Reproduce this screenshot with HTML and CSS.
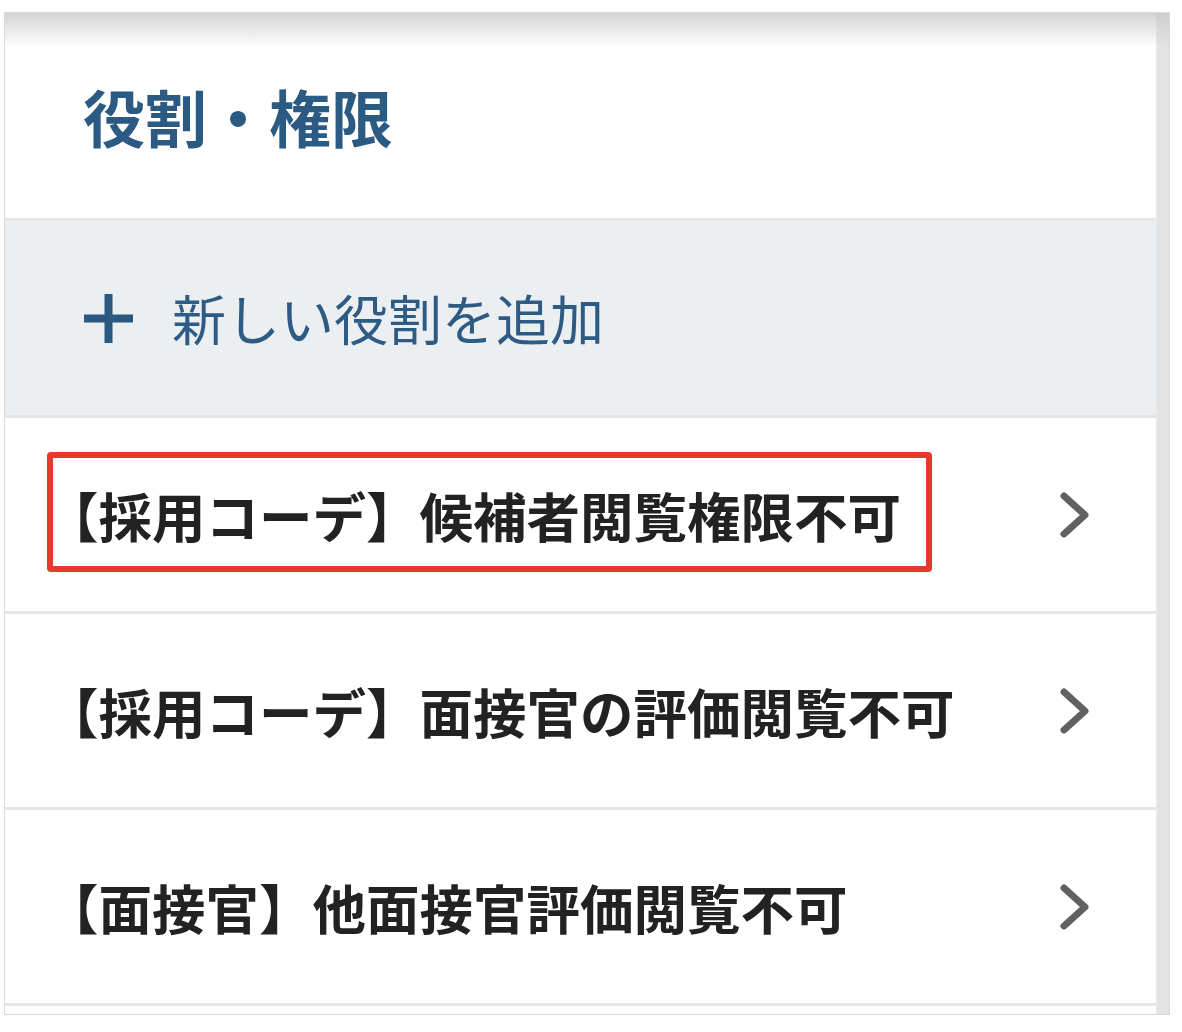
FILE: index.html
```html
<!DOCTYPE html>
<html lang="ja">

<head>
    <meta charset="UTF-8">
    <meta name="viewport" content="width=device-width, initial-scale=1.0">
    <title>役割・権限</title>
    <link rel="stylesheet" href="styles.css">
</head>

<body>
    <div class="panel">
        <div class="list">
            <div class="header">
                <h1 class="title">役割・権限</h1>
            </div>

            <div class="add-row">
                <svg class="plus" width="51" height="51" viewBox="0 0 51 51">
                    <path d="M25.5 1 V50 M1 25.5 H50" stroke="#2a5880" stroke-width="8" fill="none" />
                </svg>
                <span class="add-text">新しい役割を追加</span>
            </div>

            <div class="role">
                <span class="role-name">【採用コーデ】候補者閲覧権限不可</span>
                <svg class="chevron" width="30" height="46" viewBox="0 0 30 46">
                    <polyline points="4,4 25,23 4,42" stroke="#616161" stroke-width="7" fill="none" stroke-linecap="round" stroke-linejoin="round" />
                </svg>
                <div class="highlight"></div>
            </div>

            <div class="role">
                <span class="role-name">【採用コーデ】面接官の評価閲覧不可</span>
                <svg class="chevron" width="30" height="46" viewBox="0 0 30 46">
                    <polyline points="4,4 25,23 4,42" stroke="#616161" stroke-width="7" fill="none" stroke-linecap="round" stroke-linejoin="round" />
                </svg>
            </div>

            <div class="role">
                <span class="role-name">【面接官】他面接官評価閲覧不可</span>
                <svg class="chevron" width="30" height="46" viewBox="0 0 30 46">
                    <polyline points="4,4 25,23 4,42" stroke="#616161" stroke-width="7" fill="none" stroke-linecap="round" stroke-linejoin="round" />
                </svg>
            </div>

            <!-- next row, scrolled out of view -->
            <div class="role"></div>
        </div>
        <div class="scrollbar"></div>
    </div>
</body>

</html>
```

FILE: styles.css
```css
body {
    margin: 0;
    background: #fff;
    font-family: "Noto Sans CJK JP", "Noto Sans", sans-serif;
}

.panel {
    position: relative;
    margin: 12px 0 0 4px;
    width: 1166px;
    height: 1003px;
    box-sizing: border-box;
    border: 1px solid #d9d9d9;
    display: flex;
    overflow: hidden;
}

/* soft shadow along the top edge */
.panel::before {
    content: "";
    position: absolute;
    top: 0;
    left: 0;
    right: 0;
    height: 34px;
    background: linear-gradient(rgba(200, 200, 200, 0.8), rgba(255, 255, 255, 0));
    pointer-events: none;
}

.list {
    flex: 1;
    overflow: hidden;
}

.scrollbar {
    width: 12px;
    background: #e3e3e3;
    border-left: 1px solid #ececec;
}

.header {
    height: 205px;
    display: flex;
    align-items: center;
    padding-left: 78px;
    border-bottom: 3px solid #e6e6e6;
}

.title {
    margin: 0;
    font-size: 62px;
    font-weight: 700;
    color: #2b5a83;
    line-height: 1;
}

.add-row {
    height: 194px;
    display: flex;
    align-items: center;
    gap: 38px;
    padding-left: 78px;
    background: #eceff2;
    border-bottom: 3px solid #e4e4e4;
}

.add-text {
    font-size: 54px;
    font-weight: 400;
    color: #2e5b84;
    line-height: 1;
}

.role {
    position: relative;
    height: 193px;
    display: flex;
    align-items: center;
    justify-content: space-between;
    padding: 0 66px 0 40px;
    border-bottom: 3px solid #e6e6e6;
}

.role-name {
    font-size: 53.5px;
    font-weight: 700;
    color: #222;
    line-height: 1;
}

/* red annotation box around the first role */
.highlight {
    position: absolute;
    left: 42px;
    top: 34px;
    width: 885px;
    height: 120px;
    box-sizing: border-box;
    border: 6px solid #e53a2b;
    border-radius: 4px;
}
```
